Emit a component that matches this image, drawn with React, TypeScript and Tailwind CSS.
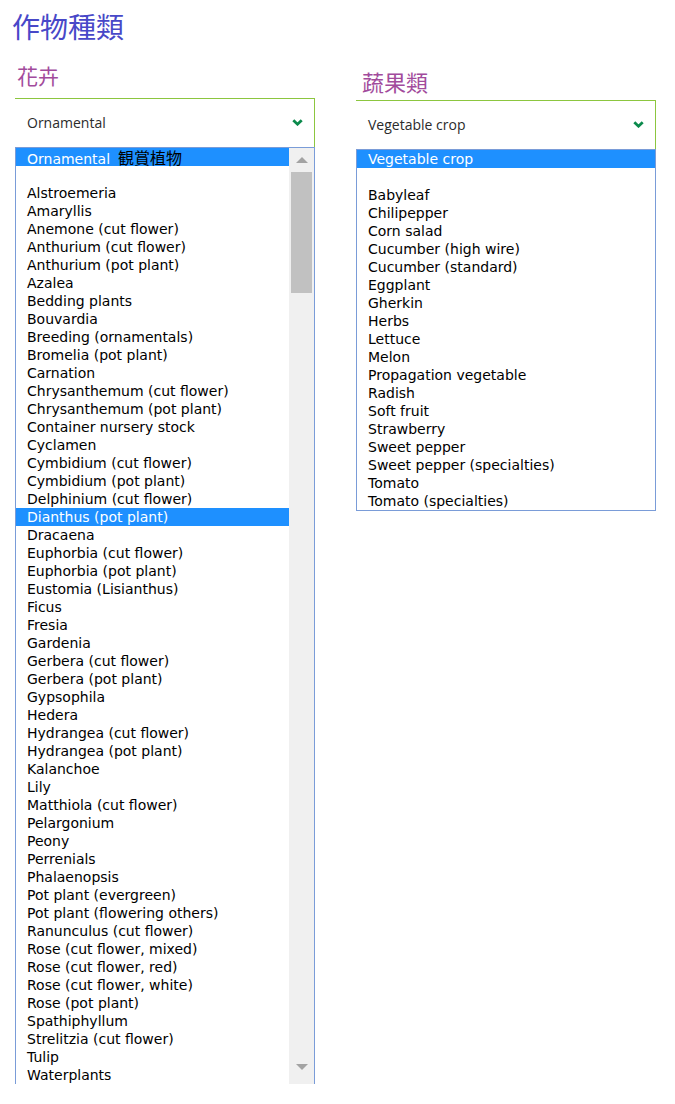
const ornamental = [
  'Alstroemeria', 'Amaryllis', 'Anemone (cut flower)', 'Anthurium (cut flower)', 'Anthurium (pot plant)', 'Azalea',
  'Bedding plants', 'Bouvardia', 'Breeding (ornamentals)', 'Bromelia (pot plant)', 'Carnation',
  'Chrysanthemum (cut flower)', 'Chrysanthemum (pot plant)', 'Container nursery stock', 'Cyclamen',
  'Cymbidium (cut flower)', 'Cymbidium (pot plant)', 'Delphinium (cut flower)', 'Dianthus (pot plant)', 'Dracaena',
  'Euphorbia (cut flower)', 'Euphorbia (pot plant)', 'Eustomia (Lisianthus)', 'Ficus', 'Fresia', 'Gardenia',
  'Gerbera (cut flower)', 'Gerbera (pot plant)', 'Gypsophila', 'Hedera', 'Hydrangea (cut flower)',
  'Hydrangea (pot plant)', 'Kalanchoe', 'Lily', 'Matthiola (cut flower)', 'Pelargonium', 'Peony', 'Perrenials',
  'Phalaenopsis', 'Pot plant (evergreen)', 'Pot plant (flowering others)', 'Ranunculus (cut flower)',
  'Rose (cut flower, mixed)', 'Rose (cut flower, red)', 'Rose (cut flower, white)', 'Rose (pot plant)',
  'Spathiphyllum', 'Strelitzia (cut flower)', 'Tulip', 'Waterplants',
];

const vegetables = [
  'Babyleaf', 'Chilipepper', 'Corn salad', 'Cucumber (high wire)', 'Cucumber (standard)', 'Eggplant', 'Gherkin',
  'Herbs', 'Lettuce', 'Melon', 'Propagation vegetable', 'Radish', 'Soft fruit', 'Strawberry', 'Sweet pepper',
  'Sweet pepper (specialties)', 'Tomato', 'Tomato (specialties)',
];

const cjk = "font-['Noto_Sans_CJK_TC','Noto_Sans_CJK_JP',sans-serif]";

function SelectBox({ value }: { value: string }) {
  return (
    <div className="flex items-center justify-between h-[49px] border-t border-r border-[#8cc63f] bg-white pl-[12px] pr-[11px]">
      <span className="font-['Open_Sans',sans-serif] text-[14px] text-[#2b2b2b] -mt-[2px]">{value}</span>
      <svg width="11" height="7" viewBox="0 0 11 7" className="-mt-[2px]">
        <path d="M1.3 1.3 L5.5 5.2 L9.7 1.3" fill="none" stroke="#0b8a4c" strokeWidth="2.8" />
      </svg>
    </div>
  );
}

function Row({ label, selected }: { label: string; selected?: boolean }) {
  return (
    <div className={`h-[18px] leading-[18px] pl-[11px] whitespace-nowrap ${selected ? 'bg-[#1e90ff] text-white' : 'text-black'}`}>
      {label}
    </div>
  );
}

export default function App() {
  return (
    <div className="min-h-[1104px] bg-white pl-[15px] pt-[6px] font-['DejaVu_Sans',sans-serif] text-[14px]">
      <h1 className={`${cjk} text-[28px] leading-[40px] text-[#4848c8] -ml-[3px]`}>作物種類</h1>

      <div className="flex gap-[41px]">
        {/* ornamental */}
        <div className="w-[300px]">
          <div className={`${cjk} text-[21px] leading-[30px] text-[#a24b9c] mt-[14px] mb-[8px] ml-[2px]`}>花卉</div>
          <SelectBox value="Ornamental" />
          <div className="flex border-t border-l border-r border-[#7a9cd8] bg-white">
            <div className="flex-1">
              <div className="h-[18px] leading-[18px] pl-[11px] bg-[#1e90ff] whitespace-nowrap">
                <span className="text-white">Ornamental</span>
                <span className={`${cjk} text-black text-[16px] ml-[8px]`}>観賞植物</span>
              </div>
              <Row label="" />
              {ornamental.map((o) => (
                <Row key={o} label={o} selected={o === 'Dianthus (pot plant)'} />
              ))}
            </div>
            <div className="w-[25px] bg-[#f0f0f0] flex flex-col items-center">
              <div className="h-[24px] flex items-center justify-center">
                <div className="w-0 h-0 border-l-[6px] border-r-[6px] border-b-[6px] border-l-transparent border-r-transparent border-b-[#a3a3a3]" />
              </div>
              <div className="w-[21px] h-[121px] bg-[#c1c1c1]" />
              <div className="flex-1" />
              <div className="h-[24px] flex items-start justify-center pt-[4px]">
                <div className="w-0 h-0 border-l-[6px] border-r-[6px] border-t-[6px] border-l-transparent border-r-transparent border-t-[#a3a3a3]" />
              </div>
            </div>
          </div>
        </div>

        {/* vegetables */}
        <div className="w-[300px]">
          <div className={`${cjk} text-[22px] leading-[30px] text-[#a24b9c] mt-[20px] mb-[4px] ml-[6px]`}>蔬果類</div>
          <SelectBox value="Vegetable crop" />
          <div className="border border-[#7a9cd8] bg-white">
            <Row label="Vegetable crop" selected />
            <Row label="" />
            {vegetables.map((v) => (
              <Row key={v} label={v} />
            ))}
          </div>
        </div>
      </div>
    </div>
  );
}
